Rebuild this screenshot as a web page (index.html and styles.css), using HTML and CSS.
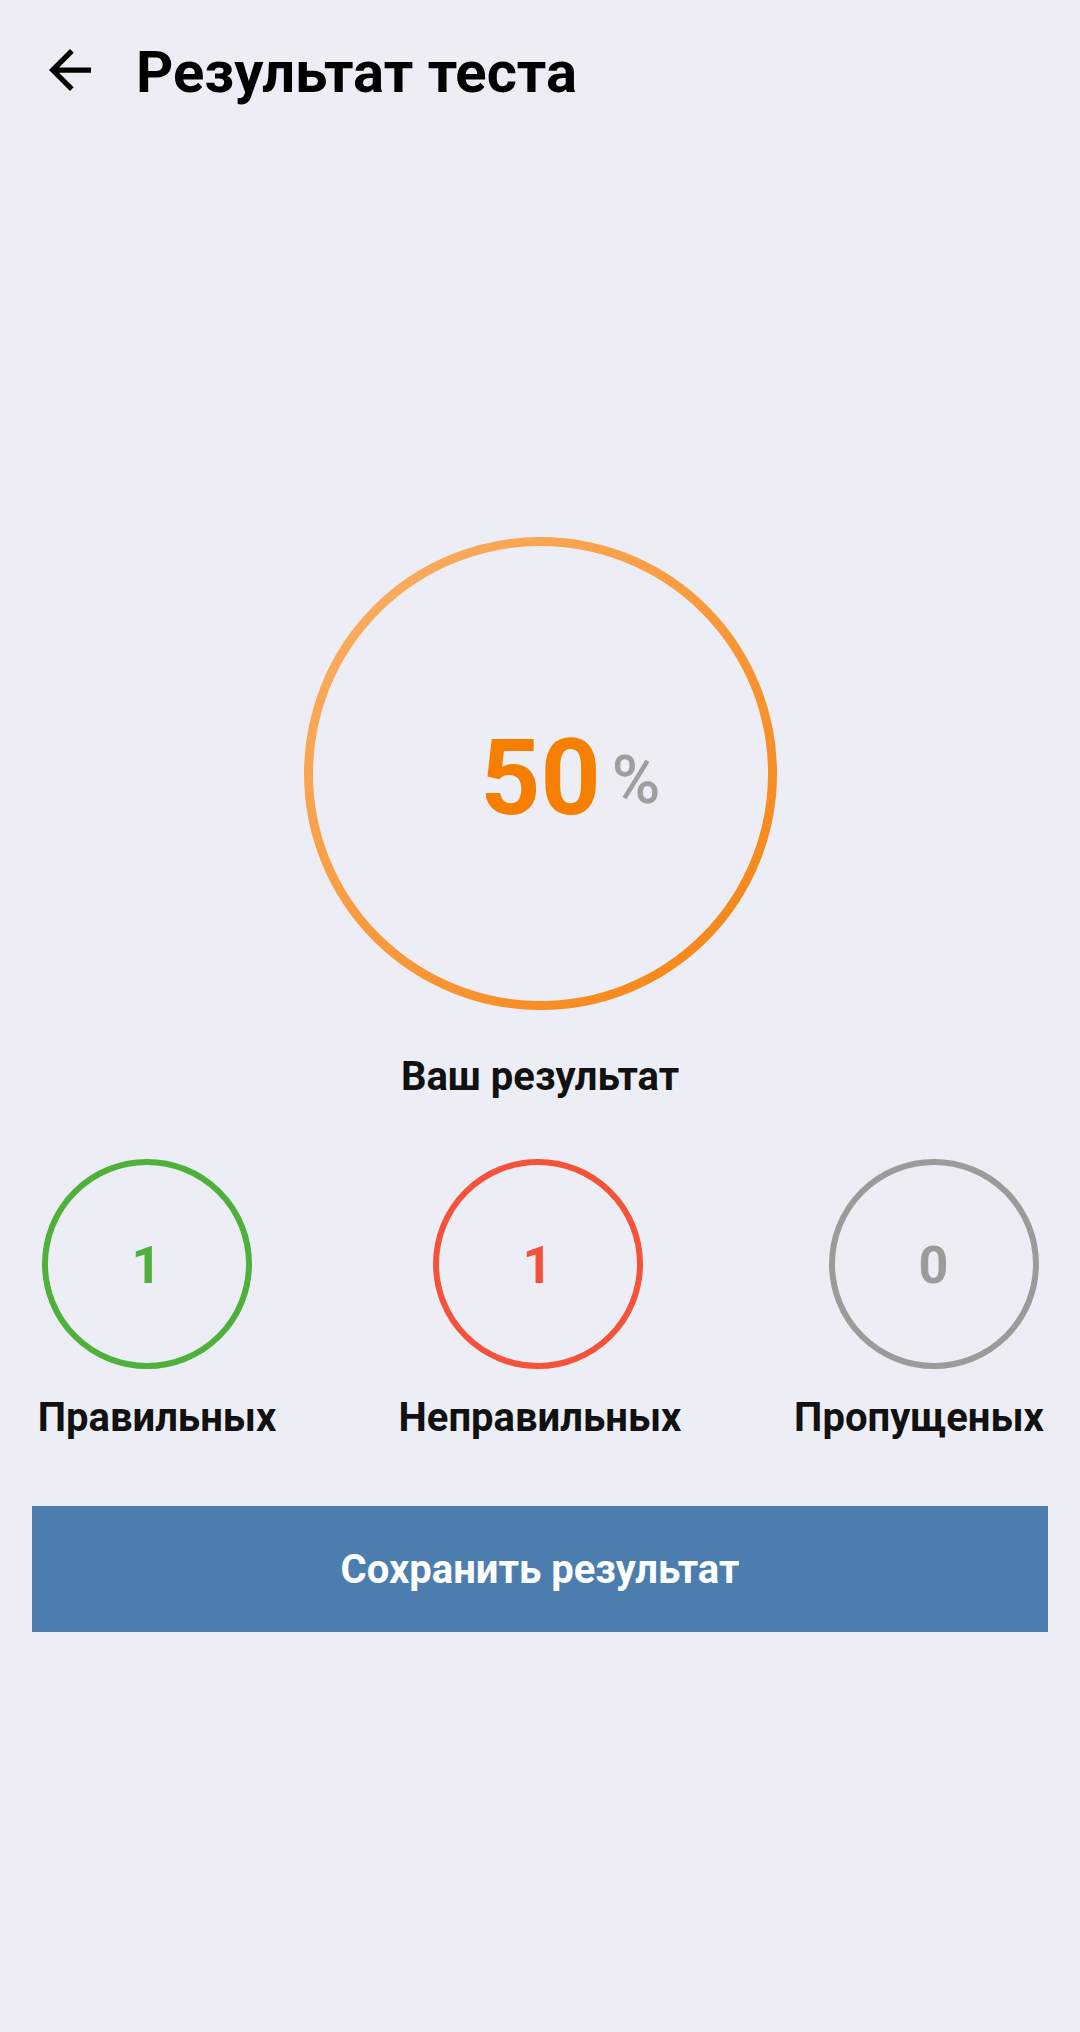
FILE: index.html
```html
<!DOCTYPE html>
<html lang="ru">
<head>
<meta charset="utf-8">
<title>Результат теста</title>
<link rel="stylesheet" href="styles.css">
</head>
<body>
<div class="screen">
  <header class="toolbar">
    <svg class="back" width="42" height="42" viewBox="4 4 16 16" aria-hidden="true">
      <path d="M20 11H7.83l5.59-5.59L12 4l-8 8 8 8 1.41-1.41L7.83 13H20v-2z" fill="#000"/>
    </svg>
    <h1 class="title">Результат теста</h1>
  </header>

  <main class="content">
    <div class="ring">
      <svg class="ring-svg" width="473" height="473" viewBox="0 0 473 473" aria-hidden="true">
        <defs>
          <linearGradient id="rg" x1="0" y1="0" x2="1" y2="1">
            <stop offset="0" stop-color="#f9b068"/>
            <stop offset="0.5" stop-color="#f89a3c"/>
            <stop offset="1" stop-color="#f6830f"/>
          </linearGradient>
        </defs>
        <circle cx="236.5" cy="236.5" r="232" fill="none" stroke="url(#rg)" stroke-width="9"/>
      </svg>
      <div class="score">
        <span class="score-pad"></span>
        <span class="score-value">50</span>
        <span class="score-unit">%</span>
      </div>
    </div>
    <div class="score-label">Ваш результат</div>

    <div class="stats">
      <div class="stat stat-ok">
        <div class="stat-circle">1</div>
        <div class="stat-label">Правильных</div>
      </div>
      <div class="stat stat-bad">
        <div class="stat-circle">1</div>
        <div class="stat-label">Неправильных</div>
      </div>
      <div class="stat stat-skip">
        <div class="stat-circle">0</div>
        <div class="stat-label">Пропущеных</div>
      </div>
    </div>

    <button class="save" type="button">Сохранить результат</button>
  </main>
</div>
</body>
</html>
```

FILE: styles.css
```css
* { box-sizing: border-box; }

html, body {
  margin: 0;
  padding: 0;
  background: #edeef5;
}

body {
  font-family: Roboto, "Noto Sans", "Liberation Sans", sans-serif;
  color: #000;
}

.screen {
  width: 1080px;
  min-height: 2032px;
  background: #edeef5;
}

.toolbar {
  height: 140px;
  display: flex;
  align-items: center;
  padding-left: 49px;
}

.back {
  display: block;
  flex: none;
}

.title {
  margin: 0 0 0 45px;
  padding-top: 4px;
  font-size: 58px;
  line-height: 58px;
  font-weight: 700;
  color: #000;
}

.content {
  display: flex;
  flex-direction: column;
  align-items: center;
}

.ring {
  margin-top: 397px;
  width: 473px;
  height: 473px;
  display: grid;
  place-items: center;
  margin-left: 1px;
}

.ring-svg {
  grid-area: 1 / 1;
  display: block;
}

.score {
  grid-area: 1 / 1;
  width: 100%;
  display: grid;
  grid-template-columns: 1fr auto 1fr;
  align-items: baseline;
  padding-top: 9px;
}

.score-value {
  font-size: 105px;
  line-height: 105px;
  font-weight: 700;
  color: #f77f00;
}

.score-unit {
  justify-self: start;
  margin-left: 11px;
  font-size: 66px;
  line-height: 66px;
  font-weight: 500;
  color: #9e9e9e;
  position: relative;
  top: -11px;
}

.score-label {
  margin-top: 44px;
  font-size: 40px;
  line-height: 46px;
  font-weight: 700;
  color: #111;
}

.stats {
  align-self: stretch;
  margin-top: 59px;
  display: grid;
  grid-template-columns: 238px 290px 250px;
  column-gap: 119px;
  padding-left: 38px;
}

.stats .stat:nth-child(3) {
  margin-left: -20px;
}

.stat {
  display: flex;
  flex-direction: column;
  align-items: center;
}

.stat-circle {
  width: 210px;
  height: 210px;
  border-radius: 50%;
  border: 6px solid currentColor;
  display: flex;
  align-items: center;
  justify-content: center;
  font-size: 52px;
  line-height: 52px;
  font-weight: 700;
  padding-top: 3px;
}

.stat-ok .stat-circle { color: #4fb03c; margin-right: 21px; }
.stat-bad .stat-circle { color: #f4533a; margin-right: 5px; }
.stat-skip .stat-circle { color: #9b9b9b; margin-left: 29px; }

.stat-label {
  margin-top: 26px;
  font-size: 40px;
  line-height: 46px;
  font-weight: 700;
  color: #111;
  white-space: nowrap;
}

.save {
  align-self: stretch;
  margin: 65px 32px 0;
  height: 126px;
  border: 0;
  border-radius: 0;
  background: #4b7eae;
  color: #fff;
  font-family: Roboto, "Noto Sans", "Liberation Sans", sans-serif;
  font-size: 40px;
  font-weight: 700;
  padding: 0;
}
```
